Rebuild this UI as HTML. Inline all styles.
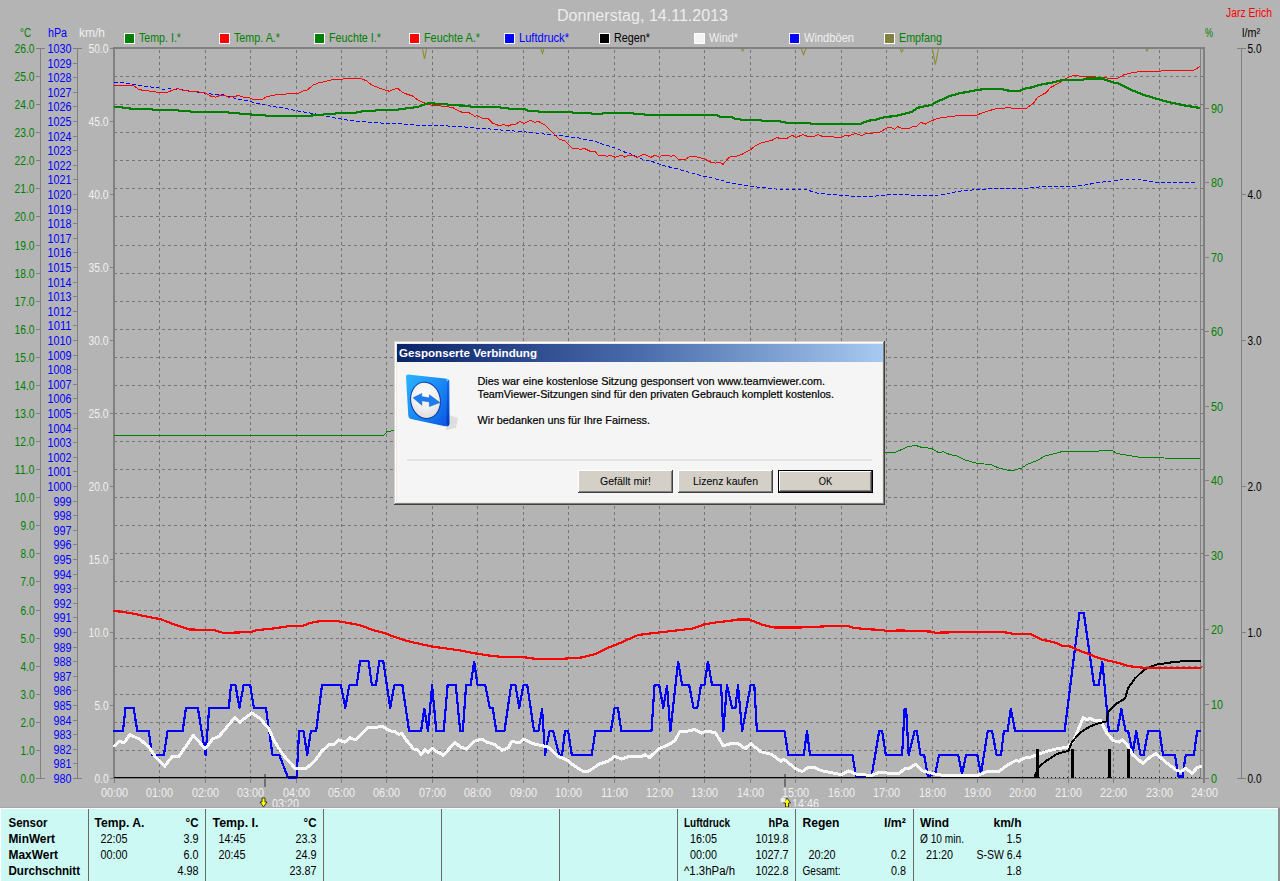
<!DOCTYPE html><html><head><meta charset="utf-8"><style>html,body{margin:0;padding:0;background:#b4b4b4;overflow:hidden}svg{display:block}text{font-family:"Liberation Sans",sans-serif}</style></head><body>
<svg width="1280" height="881" viewBox="0 0 1280 881">
<rect x="0" y="0" width="1280" height="881" fill="#b4b4b4" />
<text x="557" y="21" fill="#ececec" font-size="16" text-anchor="start" textLength="171" lengthAdjust="spacingAndGlyphs" >Donnerstag, 14.11.2013</text>
<text x="1226" y="17" fill="#ff0000" font-size="12" text-anchor="start" textLength="46" lengthAdjust="spacingAndGlyphs" >Jarz Erich</text>
<rect x="124" y="33" width="11" height="11" fill="#ffffff" />
<rect x="125" y="34" width="9" height="9" fill="#008000" />
<text x="139" y="42" fill="#008000" font-size="12" text-anchor="start" textLength="42" lengthAdjust="spacingAndGlyphs" >Temp. I.*</text>
<rect x="219" y="33" width="11" height="11" fill="#ffffff" />
<rect x="220" y="34" width="9" height="9" fill="#ff0000" />
<text x="234" y="42" fill="#008000" font-size="12" text-anchor="start" textLength="46" lengthAdjust="spacingAndGlyphs" >Temp. A.*</text>
<rect x="314" y="33" width="11" height="11" fill="#ffffff" />
<rect x="315" y="34" width="9" height="9" fill="#008000" />
<text x="329" y="42" fill="#008000" font-size="12" text-anchor="start" textLength="52" lengthAdjust="spacingAndGlyphs" >Feuchte I.*</text>
<rect x="409" y="33" width="11" height="11" fill="#ffffff" />
<rect x="410" y="34" width="9" height="9" fill="#ff0000" />
<text x="424" y="42" fill="#008000" font-size="12" text-anchor="start" textLength="56" lengthAdjust="spacingAndGlyphs" >Feuchte A.*</text>
<rect x="504" y="33" width="11" height="11" fill="#ffffff" />
<rect x="505" y="34" width="9" height="9" fill="#0000ff" />
<text x="519" y="42" fill="#0000ff" font-size="12" text-anchor="start" textLength="50" lengthAdjust="spacingAndGlyphs" >Luftdruck*</text>
<rect x="599" y="33" width="11" height="11" fill="#ffffff" />
<rect x="600" y="34" width="9" height="9" fill="#000000" />
<text x="614" y="42" fill="#000000" font-size="12" text-anchor="start" textLength="36" lengthAdjust="spacingAndGlyphs" >Regen*</text>
<rect x="694" y="33" width="11" height="11" fill="#ffffff" />
<rect x="695" y="34" width="9" height="9" fill="#f4f4f4" />
<text x="709" y="42" fill="#f0f0f0" font-size="12" text-anchor="start" textLength="29" lengthAdjust="spacingAndGlyphs" >Wind*</text>
<rect x="789" y="33" width="11" height="11" fill="#ffffff" />
<rect x="790" y="34" width="9" height="9" fill="#0000ff" />
<text x="804" y="42" fill="#f0f0f0" font-size="12" text-anchor="start" textLength="50" lengthAdjust="spacingAndGlyphs" >Windböen</text>
<rect x="884" y="33" width="11" height="11" fill="#ffffff" />
<rect x="885" y="34" width="9" height="9" fill="#808040" />
<text x="899" y="42" fill="#008000" font-size="12" text-anchor="start" textLength="43" lengthAdjust="spacingAndGlyphs" >Empfang</text>
<text x="20" y="37" fill="#008000" font-size="12" text-anchor="start" textLength="11" lengthAdjust="spacingAndGlyphs" >°C</text>
<text x="48" y="37" fill="#0000ff" font-size="12" text-anchor="start" textLength="19" lengthAdjust="spacingAndGlyphs" >hPa</text>
<text x="79" y="37" fill="#f0f0f0" font-size="12" text-anchor="start" textLength="26" lengthAdjust="spacingAndGlyphs" >km/h</text>
<text x="1205" y="37" fill="#008000" font-size="12" text-anchor="start" textLength="8" lengthAdjust="spacingAndGlyphs" >%</text>
<text x="1242" y="37" fill="#000000" font-size="12" text-anchor="start" textLength="18" lengthAdjust="spacingAndGlyphs" >l/m²</text>
<g shape-rendering="crispEdges">
<rect x="40" y="48" width="1" height="731" fill="#808080" />
<rect x="77" y="48" width="1" height="731" fill="#808080" />
<rect x="36" y="48" width="9" height="1" fill="#808080" />
<rect x="36" y="76" width="4" height="1" fill="#808080" />
<rect x="36" y="104" width="4" height="1" fill="#808080" />
<rect x="36" y="132" width="4" height="1" fill="#808080" />
<rect x="36" y="160" width="4" height="1" fill="#808080" />
<rect x="36" y="188" width="4" height="1" fill="#808080" />
<rect x="36" y="216" width="4" height="1" fill="#808080" />
<rect x="36" y="245" width="4" height="1" fill="#808080" />
<rect x="36" y="273" width="4" height="1" fill="#808080" />
<rect x="36" y="301" width="4" height="1" fill="#808080" />
<rect x="36" y="329" width="4" height="1" fill="#808080" />
<rect x="36" y="357" width="4" height="1" fill="#808080" />
<rect x="36" y="385" width="4" height="1" fill="#808080" />
<rect x="36" y="413" width="4" height="1" fill="#808080" />
<rect x="36" y="441" width="4" height="1" fill="#808080" />
<rect x="36" y="469" width="4" height="1" fill="#808080" />
<rect x="36" y="497" width="4" height="1" fill="#808080" />
<rect x="36" y="525" width="4" height="1" fill="#808080" />
<rect x="36" y="553" width="4" height="1" fill="#808080" />
<rect x="36" y="581" width="4" height="1" fill="#808080" />
<rect x="36" y="610" width="4" height="1" fill="#808080" />
<rect x="36" y="638" width="4" height="1" fill="#808080" />
<rect x="36" y="666" width="4" height="1" fill="#808080" />
<rect x="36" y="694" width="4" height="1" fill="#808080" />
<rect x="36" y="722" width="4" height="1" fill="#808080" />
<rect x="36" y="750" width="4" height="1" fill="#808080" />
<rect x="36" y="778" width="9" height="1" fill="#808080" />
<rect x="73" y="48" width="9" height="1" fill="#808080" />
<rect x="73" y="63" width="4" height="1" fill="#808080" />
<rect x="73" y="77" width="4" height="1" fill="#808080" />
<rect x="73" y="92" width="4" height="1" fill="#808080" />
<rect x="73" y="106" width="4" height="1" fill="#808080" />
<rect x="73" y="121" width="4" height="1" fill="#808080" />
<rect x="73" y="136" width="4" height="1" fill="#808080" />
<rect x="73" y="150" width="4" height="1" fill="#808080" />
<rect x="73" y="165" width="4" height="1" fill="#808080" />
<rect x="73" y="179" width="4" height="1" fill="#808080" />
<rect x="73" y="194" width="4" height="1" fill="#808080" />
<rect x="73" y="209" width="4" height="1" fill="#808080" />
<rect x="73" y="223" width="4" height="1" fill="#808080" />
<rect x="73" y="238" width="4" height="1" fill="#808080" />
<rect x="73" y="252" width="4" height="1" fill="#808080" />
<rect x="73" y="267" width="4" height="1" fill="#808080" />
<rect x="73" y="282" width="4" height="1" fill="#808080" />
<rect x="73" y="296" width="4" height="1" fill="#808080" />
<rect x="73" y="311" width="4" height="1" fill="#808080" />
<rect x="73" y="325" width="4" height="1" fill="#808080" />
<rect x="73" y="340" width="4" height="1" fill="#808080" />
<rect x="73" y="355" width="4" height="1" fill="#808080" />
<rect x="73" y="369" width="4" height="1" fill="#808080" />
<rect x="73" y="384" width="4" height="1" fill="#808080" />
<rect x="73" y="398" width="4" height="1" fill="#808080" />
<rect x="73" y="413" width="4" height="1" fill="#808080" />
<rect x="73" y="428" width="4" height="1" fill="#808080" />
<rect x="73" y="442" width="4" height="1" fill="#808080" />
<rect x="73" y="457" width="4" height="1" fill="#808080" />
<rect x="73" y="471" width="4" height="1" fill="#808080" />
<rect x="73" y="486" width="4" height="1" fill="#808080" />
<rect x="73" y="501" width="4" height="1" fill="#808080" />
<rect x="73" y="515" width="4" height="1" fill="#808080" />
<rect x="73" y="530" width="4" height="1" fill="#808080" />
<rect x="73" y="544" width="4" height="1" fill="#808080" />
<rect x="73" y="559" width="4" height="1" fill="#808080" />
<rect x="73" y="574" width="4" height="1" fill="#808080" />
<rect x="73" y="588" width="4" height="1" fill="#808080" />
<rect x="73" y="603" width="4" height="1" fill="#808080" />
<rect x="73" y="617" width="4" height="1" fill="#808080" />
<rect x="73" y="632" width="4" height="1" fill="#808080" />
<rect x="73" y="647" width="4" height="1" fill="#808080" />
<rect x="73" y="661" width="4" height="1" fill="#808080" />
<rect x="73" y="676" width="4" height="1" fill="#808080" />
<rect x="73" y="690" width="4" height="1" fill="#808080" />
<rect x="73" y="705" width="4" height="1" fill="#808080" />
<rect x="73" y="720" width="4" height="1" fill="#808080" />
<rect x="73" y="734" width="4" height="1" fill="#808080" />
<rect x="73" y="749" width="4" height="1" fill="#808080" />
<rect x="73" y="763" width="4" height="1" fill="#808080" />
<rect x="73" y="778" width="9" height="1" fill="#808080" />
<rect x="110" y="48" width="4" height="1" fill="#808080" />
<rect x="110" y="121" width="4" height="1" fill="#808080" />
<rect x="110" y="194" width="4" height="1" fill="#808080" />
<rect x="110" y="267" width="4" height="1" fill="#808080" />
<rect x="110" y="340" width="4" height="1" fill="#808080" />
<rect x="110" y="413" width="4" height="1" fill="#808080" />
<rect x="110" y="486" width="4" height="1" fill="#808080" />
<rect x="110" y="559" width="4" height="1" fill="#808080" />
<rect x="110" y="632" width="4" height="1" fill="#808080" />
<rect x="110" y="705" width="4" height="1" fill="#808080" />
<rect x="110" y="778" width="4" height="1" fill="#808080" />
</g>
<text x="34.5" y="53" fill="#008000" font-size="12" text-anchor="end" textLength="20" lengthAdjust="spacingAndGlyphs" >26.0</text>
<text x="34.5" y="81" fill="#008000" font-size="12" text-anchor="end" textLength="20" lengthAdjust="spacingAndGlyphs" >25.0</text>
<text x="34.5" y="109" fill="#008000" font-size="12" text-anchor="end" textLength="20" lengthAdjust="spacingAndGlyphs" >24.0</text>
<text x="34.5" y="137" fill="#008000" font-size="12" text-anchor="end" textLength="20" lengthAdjust="spacingAndGlyphs" >23.0</text>
<text x="34.5" y="165" fill="#008000" font-size="12" text-anchor="end" textLength="20" lengthAdjust="spacingAndGlyphs" >22.0</text>
<text x="34.5" y="193" fill="#008000" font-size="12" text-anchor="end" textLength="20" lengthAdjust="spacingAndGlyphs" >21.0</text>
<text x="34.5" y="221" fill="#008000" font-size="12" text-anchor="end" textLength="20" lengthAdjust="spacingAndGlyphs" >20.0</text>
<text x="34.5" y="250" fill="#008000" font-size="12" text-anchor="end" textLength="20" lengthAdjust="spacingAndGlyphs" >19.0</text>
<text x="34.5" y="278" fill="#008000" font-size="12" text-anchor="end" textLength="20" lengthAdjust="spacingAndGlyphs" >18.0</text>
<text x="34.5" y="306" fill="#008000" font-size="12" text-anchor="end" textLength="20" lengthAdjust="spacingAndGlyphs" >17.0</text>
<text x="34.5" y="334" fill="#008000" font-size="12" text-anchor="end" textLength="20" lengthAdjust="spacingAndGlyphs" >16.0</text>
<text x="34.5" y="362" fill="#008000" font-size="12" text-anchor="end" textLength="20" lengthAdjust="spacingAndGlyphs" >15.0</text>
<text x="34.5" y="390" fill="#008000" font-size="12" text-anchor="end" textLength="20" lengthAdjust="spacingAndGlyphs" >14.0</text>
<text x="34.5" y="418" fill="#008000" font-size="12" text-anchor="end" textLength="20" lengthAdjust="spacingAndGlyphs" >13.0</text>
<text x="34.5" y="446" fill="#008000" font-size="12" text-anchor="end" textLength="20" lengthAdjust="spacingAndGlyphs" >12.0</text>
<text x="34.5" y="474" fill="#008000" font-size="12" text-anchor="end" textLength="20" lengthAdjust="spacingAndGlyphs" >11.0</text>
<text x="34.5" y="502" fill="#008000" font-size="12" text-anchor="end" textLength="20" lengthAdjust="spacingAndGlyphs" >10.0</text>
<text x="34.5" y="530" fill="#008000" font-size="12" text-anchor="end" textLength="14" lengthAdjust="spacingAndGlyphs" >9.0</text>
<text x="34.5" y="558" fill="#008000" font-size="12" text-anchor="end" textLength="14" lengthAdjust="spacingAndGlyphs" >8.0</text>
<text x="34.5" y="586" fill="#008000" font-size="12" text-anchor="end" textLength="14" lengthAdjust="spacingAndGlyphs" >7.0</text>
<text x="34.5" y="615" fill="#008000" font-size="12" text-anchor="end" textLength="14" lengthAdjust="spacingAndGlyphs" >6.0</text>
<text x="34.5" y="643" fill="#008000" font-size="12" text-anchor="end" textLength="14" lengthAdjust="spacingAndGlyphs" >5.0</text>
<text x="34.5" y="671" fill="#008000" font-size="12" text-anchor="end" textLength="14" lengthAdjust="spacingAndGlyphs" >4.0</text>
<text x="34.5" y="699" fill="#008000" font-size="12" text-anchor="end" textLength="14" lengthAdjust="spacingAndGlyphs" >3.0</text>
<text x="34.5" y="727" fill="#008000" font-size="12" text-anchor="end" textLength="14" lengthAdjust="spacingAndGlyphs" >2.0</text>
<text x="34.5" y="755" fill="#008000" font-size="12" text-anchor="end" textLength="14" lengthAdjust="spacingAndGlyphs" >1.0</text>
<text x="34.5" y="783" fill="#008000" font-size="12" text-anchor="end" textLength="14" lengthAdjust="spacingAndGlyphs" >0.0</text>
<text x="71.5" y="53" fill="#0000ff" font-size="12" text-anchor="end" textLength="24" lengthAdjust="spacingAndGlyphs" >1030</text>
<text x="71.5" y="68" fill="#0000ff" font-size="12" text-anchor="end" textLength="24" lengthAdjust="spacingAndGlyphs" >1029</text>
<text x="71.5" y="82" fill="#0000ff" font-size="12" text-anchor="end" textLength="24" lengthAdjust="spacingAndGlyphs" >1028</text>
<text x="71.5" y="97" fill="#0000ff" font-size="12" text-anchor="end" textLength="24" lengthAdjust="spacingAndGlyphs" >1027</text>
<text x="71.5" y="111" fill="#0000ff" font-size="12" text-anchor="end" textLength="24" lengthAdjust="spacingAndGlyphs" >1026</text>
<text x="71.5" y="126" fill="#0000ff" font-size="12" text-anchor="end" textLength="24" lengthAdjust="spacingAndGlyphs" >1025</text>
<text x="71.5" y="141" fill="#0000ff" font-size="12" text-anchor="end" textLength="24" lengthAdjust="spacingAndGlyphs" >1024</text>
<text x="71.5" y="155" fill="#0000ff" font-size="12" text-anchor="end" textLength="24" lengthAdjust="spacingAndGlyphs" >1023</text>
<text x="71.5" y="170" fill="#0000ff" font-size="12" text-anchor="end" textLength="24" lengthAdjust="spacingAndGlyphs" >1022</text>
<text x="71.5" y="184" fill="#0000ff" font-size="12" text-anchor="end" textLength="24" lengthAdjust="spacingAndGlyphs" >1021</text>
<text x="71.5" y="199" fill="#0000ff" font-size="12" text-anchor="end" textLength="24" lengthAdjust="spacingAndGlyphs" >1020</text>
<text x="71.5" y="214" fill="#0000ff" font-size="12" text-anchor="end" textLength="24" lengthAdjust="spacingAndGlyphs" >1019</text>
<text x="71.5" y="228" fill="#0000ff" font-size="12" text-anchor="end" textLength="24" lengthAdjust="spacingAndGlyphs" >1018</text>
<text x="71.5" y="243" fill="#0000ff" font-size="12" text-anchor="end" textLength="24" lengthAdjust="spacingAndGlyphs" >1017</text>
<text x="71.5" y="257" fill="#0000ff" font-size="12" text-anchor="end" textLength="24" lengthAdjust="spacingAndGlyphs" >1016</text>
<text x="71.5" y="272" fill="#0000ff" font-size="12" text-anchor="end" textLength="24" lengthAdjust="spacingAndGlyphs" >1015</text>
<text x="71.5" y="287" fill="#0000ff" font-size="12" text-anchor="end" textLength="24" lengthAdjust="spacingAndGlyphs" >1014</text>
<text x="71.5" y="301" fill="#0000ff" font-size="12" text-anchor="end" textLength="24" lengthAdjust="spacingAndGlyphs" >1013</text>
<text x="71.5" y="316" fill="#0000ff" font-size="12" text-anchor="end" textLength="24" lengthAdjust="spacingAndGlyphs" >1012</text>
<text x="71.5" y="330" fill="#0000ff" font-size="12" text-anchor="end" textLength="24" lengthAdjust="spacingAndGlyphs" >1011</text>
<text x="71.5" y="345" fill="#0000ff" font-size="12" text-anchor="end" textLength="24" lengthAdjust="spacingAndGlyphs" >1010</text>
<text x="71.5" y="360" fill="#0000ff" font-size="12" text-anchor="end" textLength="24" lengthAdjust="spacingAndGlyphs" >1009</text>
<text x="71.5" y="374" fill="#0000ff" font-size="12" text-anchor="end" textLength="24" lengthAdjust="spacingAndGlyphs" >1008</text>
<text x="71.5" y="389" fill="#0000ff" font-size="12" text-anchor="end" textLength="24" lengthAdjust="spacingAndGlyphs" >1007</text>
<text x="71.5" y="403" fill="#0000ff" font-size="12" text-anchor="end" textLength="24" lengthAdjust="spacingAndGlyphs" >1006</text>
<text x="71.5" y="418" fill="#0000ff" font-size="12" text-anchor="end" textLength="24" lengthAdjust="spacingAndGlyphs" >1005</text>
<text x="71.5" y="433" fill="#0000ff" font-size="12" text-anchor="end" textLength="24" lengthAdjust="spacingAndGlyphs" >1004</text>
<text x="71.5" y="447" fill="#0000ff" font-size="12" text-anchor="end" textLength="24" lengthAdjust="spacingAndGlyphs" >1003</text>
<text x="71.5" y="462" fill="#0000ff" font-size="12" text-anchor="end" textLength="24" lengthAdjust="spacingAndGlyphs" >1002</text>
<text x="71.5" y="476" fill="#0000ff" font-size="12" text-anchor="end" textLength="24" lengthAdjust="spacingAndGlyphs" >1001</text>
<text x="71.5" y="491" fill="#0000ff" font-size="12" text-anchor="end" textLength="24" lengthAdjust="spacingAndGlyphs" >1000</text>
<text x="71.5" y="506" fill="#0000ff" font-size="12" text-anchor="end" textLength="18" lengthAdjust="spacingAndGlyphs" >999</text>
<text x="71.5" y="520" fill="#0000ff" font-size="12" text-anchor="end" textLength="18" lengthAdjust="spacingAndGlyphs" >998</text>
<text x="71.5" y="535" fill="#0000ff" font-size="12" text-anchor="end" textLength="18" lengthAdjust="spacingAndGlyphs" >997</text>
<text x="71.5" y="549" fill="#0000ff" font-size="12" text-anchor="end" textLength="18" lengthAdjust="spacingAndGlyphs" >996</text>
<text x="71.5" y="564" fill="#0000ff" font-size="12" text-anchor="end" textLength="18" lengthAdjust="spacingAndGlyphs" >995</text>
<text x="71.5" y="579" fill="#0000ff" font-size="12" text-anchor="end" textLength="18" lengthAdjust="spacingAndGlyphs" >994</text>
<text x="71.5" y="593" fill="#0000ff" font-size="12" text-anchor="end" textLength="18" lengthAdjust="spacingAndGlyphs" >993</text>
<text x="71.5" y="608" fill="#0000ff" font-size="12" text-anchor="end" textLength="18" lengthAdjust="spacingAndGlyphs" >992</text>
<text x="71.5" y="622" fill="#0000ff" font-size="12" text-anchor="end" textLength="18" lengthAdjust="spacingAndGlyphs" >991</text>
<text x="71.5" y="637" fill="#0000ff" font-size="12" text-anchor="end" textLength="18" lengthAdjust="spacingAndGlyphs" >990</text>
<text x="71.5" y="652" fill="#0000ff" font-size="12" text-anchor="end" textLength="18" lengthAdjust="spacingAndGlyphs" >989</text>
<text x="71.5" y="666" fill="#0000ff" font-size="12" text-anchor="end" textLength="18" lengthAdjust="spacingAndGlyphs" >988</text>
<text x="71.5" y="681" fill="#0000ff" font-size="12" text-anchor="end" textLength="18" lengthAdjust="spacingAndGlyphs" >987</text>
<text x="71.5" y="695" fill="#0000ff" font-size="12" text-anchor="end" textLength="18" lengthAdjust="spacingAndGlyphs" >986</text>
<text x="71.5" y="710" fill="#0000ff" font-size="12" text-anchor="end" textLength="18" lengthAdjust="spacingAndGlyphs" >985</text>
<text x="71.5" y="725" fill="#0000ff" font-size="12" text-anchor="end" textLength="18" lengthAdjust="spacingAndGlyphs" >984</text>
<text x="71.5" y="739" fill="#0000ff" font-size="12" text-anchor="end" textLength="18" lengthAdjust="spacingAndGlyphs" >983</text>
<text x="71.5" y="754" fill="#0000ff" font-size="12" text-anchor="end" textLength="18" lengthAdjust="spacingAndGlyphs" >982</text>
<text x="71.5" y="768" fill="#0000ff" font-size="12" text-anchor="end" textLength="18" lengthAdjust="spacingAndGlyphs" >981</text>
<text x="71.5" y="783" fill="#0000ff" font-size="12" text-anchor="end" textLength="18" lengthAdjust="spacingAndGlyphs" >980</text>
<text x="108.5" y="53" fill="#f0f0f0" font-size="12" text-anchor="end" textLength="20" lengthAdjust="spacingAndGlyphs" >50.0</text>
<text x="108.5" y="126" fill="#f0f0f0" font-size="12" text-anchor="end" textLength="20" lengthAdjust="spacingAndGlyphs" >45.0</text>
<text x="108.5" y="199" fill="#f0f0f0" font-size="12" text-anchor="end" textLength="20" lengthAdjust="spacingAndGlyphs" >40.0</text>
<text x="108.5" y="272" fill="#f0f0f0" font-size="12" text-anchor="end" textLength="20" lengthAdjust="spacingAndGlyphs" >35.0</text>
<text x="108.5" y="345" fill="#f0f0f0" font-size="12" text-anchor="end" textLength="20" lengthAdjust="spacingAndGlyphs" >30.0</text>
<text x="108.5" y="418" fill="#f0f0f0" font-size="12" text-anchor="end" textLength="20" lengthAdjust="spacingAndGlyphs" >25.0</text>
<text x="108.5" y="491" fill="#f0f0f0" font-size="12" text-anchor="end" textLength="20" lengthAdjust="spacingAndGlyphs" >20.0</text>
<text x="108.5" y="564" fill="#f0f0f0" font-size="12" text-anchor="end" textLength="20" lengthAdjust="spacingAndGlyphs" >15.0</text>
<text x="108.5" y="637" fill="#f0f0f0" font-size="12" text-anchor="end" textLength="20" lengthAdjust="spacingAndGlyphs" >10.0</text>
<text x="108.5" y="710" fill="#f0f0f0" font-size="12" text-anchor="end" textLength="14" lengthAdjust="spacingAndGlyphs" >5.0</text>
<text x="108.5" y="783" fill="#f0f0f0" font-size="12" text-anchor="end" textLength="14" lengthAdjust="spacingAndGlyphs" >0.0</text>
<g shape-rendering="crispEdges">
<line x1="114" y1="76.5" x2="1203" y2="76.5" stroke="#767676" stroke-width="1" stroke-dasharray="3,3"/>
<line x1="114" y1="104.5" x2="1203" y2="104.5" stroke="#767676" stroke-width="1" stroke-dasharray="3,3"/>
<line x1="114" y1="132.5" x2="1203" y2="132.5" stroke="#767676" stroke-width="1" stroke-dasharray="3,3"/>
<line x1="114" y1="160.5" x2="1203" y2="160.5" stroke="#767676" stroke-width="1" stroke-dasharray="3,3"/>
<line x1="114" y1="188.5" x2="1203" y2="188.5" stroke="#767676" stroke-width="1" stroke-dasharray="3,3"/>
<line x1="114" y1="216.5" x2="1203" y2="216.5" stroke="#767676" stroke-width="1" stroke-dasharray="3,3"/>
<line x1="114" y1="245.5" x2="1203" y2="245.5" stroke="#767676" stroke-width="1" stroke-dasharray="3,3"/>
<line x1="114" y1="273.5" x2="1203" y2="273.5" stroke="#767676" stroke-width="1" stroke-dasharray="3,3"/>
<line x1="114" y1="301.5" x2="1203" y2="301.5" stroke="#767676" stroke-width="1" stroke-dasharray="3,3"/>
<line x1="114" y1="329.5" x2="1203" y2="329.5" stroke="#767676" stroke-width="1" stroke-dasharray="3,3"/>
<line x1="114" y1="357.5" x2="1203" y2="357.5" stroke="#767676" stroke-width="1" stroke-dasharray="3,3"/>
<line x1="114" y1="385.5" x2="1203" y2="385.5" stroke="#767676" stroke-width="1" stroke-dasharray="3,3"/>
<line x1="114" y1="413.5" x2="1203" y2="413.5" stroke="#767676" stroke-width="1" stroke-dasharray="3,3"/>
<line x1="114" y1="441.5" x2="1203" y2="441.5" stroke="#767676" stroke-width="1" stroke-dasharray="3,3"/>
<line x1="114" y1="469.5" x2="1203" y2="469.5" stroke="#767676" stroke-width="1" stroke-dasharray="3,3"/>
<line x1="114" y1="497.5" x2="1203" y2="497.5" stroke="#767676" stroke-width="1" stroke-dasharray="3,3"/>
<line x1="114" y1="525.5" x2="1203" y2="525.5" stroke="#767676" stroke-width="1" stroke-dasharray="3,3"/>
<line x1="114" y1="553.5" x2="1203" y2="553.5" stroke="#767676" stroke-width="1" stroke-dasharray="3,3"/>
<line x1="114" y1="581.5" x2="1203" y2="581.5" stroke="#767676" stroke-width="1" stroke-dasharray="3,3"/>
<line x1="114" y1="610.5" x2="1203" y2="610.5" stroke="#767676" stroke-width="1" stroke-dasharray="3,3"/>
<line x1="114" y1="638.5" x2="1203" y2="638.5" stroke="#767676" stroke-width="1" stroke-dasharray="3,3"/>
<line x1="114" y1="666.5" x2="1203" y2="666.5" stroke="#767676" stroke-width="1" stroke-dasharray="3,3"/>
<line x1="114" y1="694.5" x2="1203" y2="694.5" stroke="#767676" stroke-width="1" stroke-dasharray="3,3"/>
<line x1="114" y1="722.5" x2="1203" y2="722.5" stroke="#767676" stroke-width="1" stroke-dasharray="3,3"/>
<line x1="114" y1="750.5" x2="1203" y2="750.5" stroke="#767676" stroke-width="1" stroke-dasharray="3,3"/>
<line x1="159.5" y1="50" x2="159.5" y2="778" stroke="#767676" stroke-width="1" stroke-dasharray="3,3"/>
<line x1="205.5" y1="50" x2="205.5" y2="778" stroke="#767676" stroke-width="1" stroke-dasharray="3,3"/>
<line x1="250.5" y1="50" x2="250.5" y2="778" stroke="#767676" stroke-width="1" stroke-dasharray="3,3"/>
<line x1="296.5" y1="50" x2="296.5" y2="778" stroke="#767676" stroke-width="1" stroke-dasharray="3,3"/>
<line x1="341.5" y1="50" x2="341.5" y2="778" stroke="#767676" stroke-width="1" stroke-dasharray="3,3"/>
<line x1="386.5" y1="50" x2="386.5" y2="778" stroke="#767676" stroke-width="1" stroke-dasharray="3,3"/>
<line x1="432.5" y1="50" x2="432.5" y2="778" stroke="#767676" stroke-width="1" stroke-dasharray="3,3"/>
<line x1="477.5" y1="50" x2="477.5" y2="778" stroke="#767676" stroke-width="1" stroke-dasharray="3,3"/>
<line x1="523.5" y1="50" x2="523.5" y2="778" stroke="#767676" stroke-width="1" stroke-dasharray="3,3"/>
<line x1="568.5" y1="50" x2="568.5" y2="778" stroke="#767676" stroke-width="1" stroke-dasharray="3,3"/>
<line x1="614.5" y1="50" x2="614.5" y2="778" stroke="#767676" stroke-width="1" stroke-dasharray="3,3"/>
<line x1="659.5" y1="50" x2="659.5" y2="778" stroke="#767676" stroke-width="1" stroke-dasharray="3,3"/>
<line x1="704.5" y1="50" x2="704.5" y2="778" stroke="#767676" stroke-width="1" stroke-dasharray="3,3"/>
<line x1="750.5" y1="50" x2="750.5" y2="778" stroke="#767676" stroke-width="1" stroke-dasharray="3,3"/>
<line x1="795.5" y1="50" x2="795.5" y2="778" stroke="#767676" stroke-width="1" stroke-dasharray="3,3"/>
<line x1="841.5" y1="50" x2="841.5" y2="778" stroke="#767676" stroke-width="1" stroke-dasharray="3,3"/>
<line x1="886.5" y1="50" x2="886.5" y2="778" stroke="#767676" stroke-width="1" stroke-dasharray="3,3"/>
<line x1="932.5" y1="50" x2="932.5" y2="778" stroke="#767676" stroke-width="1" stroke-dasharray="3,3"/>
<line x1="977.5" y1="50" x2="977.5" y2="778" stroke="#767676" stroke-width="1" stroke-dasharray="3,3"/>
<line x1="1022.5" y1="50" x2="1022.5" y2="778" stroke="#767676" stroke-width="1" stroke-dasharray="3,3"/>
<line x1="1068.5" y1="50" x2="1068.5" y2="778" stroke="#767676" stroke-width="1" stroke-dasharray="3,3"/>
<line x1="1113.5" y1="50" x2="1113.5" y2="778" stroke="#767676" stroke-width="1" stroke-dasharray="3,3"/>
<line x1="1159.5" y1="50" x2="1159.5" y2="778" stroke="#767676" stroke-width="1" stroke-dasharray="3,3"/>
<rect x="113" y="47" width="1092" height="2" fill="#808080" />
<rect x="113" y="47" width="2" height="732" fill="#808080" />
<rect x="1200" y="49" width="1" height="729" fill="#808080" />
<rect x="1203" y="47" width="2" height="736" fill="#808080" />
<rect x="113" y="778" width="1092" height="1" fill="#808080" />
<rect x="114" y="779" width="1" height="4" fill="#808080" />
<rect x="159" y="779" width="1" height="4" fill="#808080" />
<rect x="205" y="779" width="1" height="4" fill="#808080" />
<rect x="250" y="779" width="1" height="4" fill="#808080" />
<rect x="296" y="779" width="1" height="4" fill="#808080" />
<rect x="341" y="779" width="1" height="4" fill="#808080" />
<rect x="386" y="779" width="1" height="4" fill="#808080" />
<rect x="432" y="779" width="1" height="4" fill="#808080" />
<rect x="477" y="779" width="1" height="4" fill="#808080" />
<rect x="523" y="779" width="1" height="4" fill="#808080" />
<rect x="568" y="779" width="1" height="4" fill="#808080" />
<rect x="614" y="779" width="1" height="4" fill="#808080" />
<rect x="659" y="779" width="1" height="4" fill="#808080" />
<rect x="704" y="779" width="1" height="4" fill="#808080" />
<rect x="750" y="779" width="1" height="4" fill="#808080" />
<rect x="795" y="779" width="1" height="4" fill="#808080" />
<rect x="841" y="779" width="1" height="4" fill="#808080" />
<rect x="886" y="779" width="1" height="4" fill="#808080" />
<rect x="932" y="779" width="1" height="4" fill="#808080" />
<rect x="977" y="779" width="1" height="4" fill="#808080" />
<rect x="1022" y="779" width="1" height="4" fill="#808080" />
<rect x="1068" y="779" width="1" height="4" fill="#808080" />
<rect x="1113" y="779" width="1" height="4" fill="#808080" />
<rect x="1159" y="779" width="1" height="4" fill="#808080" />
<rect x="1205" y="778" width="4" height="1" fill="#808080" />
<rect x="1205" y="704" width="4" height="1" fill="#808080" />
<rect x="1205" y="629" width="4" height="1" fill="#808080" />
<rect x="1205" y="555" width="4" height="1" fill="#808080" />
<rect x="1205" y="480" width="4" height="1" fill="#808080" />
<rect x="1205" y="406" width="4" height="1" fill="#808080" />
<rect x="1205" y="331" width="4" height="1" fill="#808080" />
<rect x="1205" y="257" width="4" height="1" fill="#808080" />
<rect x="1205" y="182" width="4" height="1" fill="#808080" />
<rect x="1205" y="108" width="4" height="1" fill="#808080" />
<rect x="1241" y="48" width="1" height="731" fill="#808080" />
<rect x="1237" y="778" width="9" height="1" fill="#808080" />
<rect x="1241" y="632" width="5" height="1" fill="#808080" />
<rect x="1241" y="486" width="5" height="1" fill="#808080" />
<rect x="1241" y="340" width="5" height="1" fill="#808080" />
<rect x="1241" y="194" width="5" height="1" fill="#808080" />
<rect x="1237" y="48" width="9" height="1" fill="#808080" />
</g>
<text x="1211" y="783" fill="#008000" font-size="12" text-anchor="start" textLength="6" lengthAdjust="spacingAndGlyphs" >0</text>
<text x="1211" y="709" fill="#008000" font-size="12" text-anchor="start" textLength="12" lengthAdjust="spacingAndGlyphs" >10</text>
<text x="1211" y="634" fill="#008000" font-size="12" text-anchor="start" textLength="12" lengthAdjust="spacingAndGlyphs" >20</text>
<text x="1211" y="560" fill="#008000" font-size="12" text-anchor="start" textLength="12" lengthAdjust="spacingAndGlyphs" >30</text>
<text x="1211" y="485" fill="#008000" font-size="12" text-anchor="start" textLength="12" lengthAdjust="spacingAndGlyphs" >40</text>
<text x="1211" y="411" fill="#008000" font-size="12" text-anchor="start" textLength="12" lengthAdjust="spacingAndGlyphs" >50</text>
<text x="1211" y="336" fill="#008000" font-size="12" text-anchor="start" textLength="12" lengthAdjust="spacingAndGlyphs" >60</text>
<text x="1211" y="262" fill="#008000" font-size="12" text-anchor="start" textLength="12" lengthAdjust="spacingAndGlyphs" >70</text>
<text x="1211" y="187" fill="#008000" font-size="12" text-anchor="start" textLength="12" lengthAdjust="spacingAndGlyphs" >80</text>
<text x="1211" y="113" fill="#008000" font-size="12" text-anchor="start" textLength="12" lengthAdjust="spacingAndGlyphs" >90</text>
<text x="1247.5" y="783" fill="#000000" font-size="12" text-anchor="start" textLength="14" lengthAdjust="spacingAndGlyphs" >0.0</text>
<text x="1247.5" y="637" fill="#000000" font-size="12" text-anchor="start" textLength="14" lengthAdjust="spacingAndGlyphs" >1.0</text>
<text x="1247.5" y="491" fill="#000000" font-size="12" text-anchor="start" textLength="14" lengthAdjust="spacingAndGlyphs" >2.0</text>
<text x="1247.5" y="345" fill="#000000" font-size="12" text-anchor="start" textLength="14" lengthAdjust="spacingAndGlyphs" >3.0</text>
<text x="1247.5" y="199" fill="#000000" font-size="12" text-anchor="start" textLength="14" lengthAdjust="spacingAndGlyphs" >4.0</text>
<text x="1247.5" y="53" fill="#000000" font-size="12" text-anchor="start" textLength="14" lengthAdjust="spacingAndGlyphs" >5.0</text>
<text x="114.5" y="797" fill="#f0f0f0" font-size="12" text-anchor="middle" textLength="27" lengthAdjust="spacingAndGlyphs" >00:00</text>
<text x="159.5" y="797" fill="#f0f0f0" font-size="12" text-anchor="middle" textLength="27" lengthAdjust="spacingAndGlyphs" >01:00</text>
<text x="205.5" y="797" fill="#f0f0f0" font-size="12" text-anchor="middle" textLength="27" lengthAdjust="spacingAndGlyphs" >02:00</text>
<text x="250.5" y="797" fill="#f0f0f0" font-size="12" text-anchor="middle" textLength="27" lengthAdjust="spacingAndGlyphs" >03:00</text>
<text x="296.5" y="797" fill="#f0f0f0" font-size="12" text-anchor="middle" textLength="27" lengthAdjust="spacingAndGlyphs" >04:00</text>
<text x="341.5" y="797" fill="#f0f0f0" font-size="12" text-anchor="middle" textLength="27" lengthAdjust="spacingAndGlyphs" >05:00</text>
<text x="386.5" y="797" fill="#f0f0f0" font-size="12" text-anchor="middle" textLength="27" lengthAdjust="spacingAndGlyphs" >06:00</text>
<text x="432.5" y="797" fill="#f0f0f0" font-size="12" text-anchor="middle" textLength="27" lengthAdjust="spacingAndGlyphs" >07:00</text>
<text x="477.5" y="797" fill="#f0f0f0" font-size="12" text-anchor="middle" textLength="27" lengthAdjust="spacingAndGlyphs" >08:00</text>
<text x="523.5" y="797" fill="#f0f0f0" font-size="12" text-anchor="middle" textLength="27" lengthAdjust="spacingAndGlyphs" >09:00</text>
<text x="568.5" y="797" fill="#f0f0f0" font-size="12" text-anchor="middle" textLength="27" lengthAdjust="spacingAndGlyphs" >10:00</text>
<text x="614.5" y="797" fill="#f0f0f0" font-size="12" text-anchor="middle" textLength="27" lengthAdjust="spacingAndGlyphs" >11:00</text>
<text x="659.5" y="797" fill="#f0f0f0" font-size="12" text-anchor="middle" textLength="27" lengthAdjust="spacingAndGlyphs" >12:00</text>
<text x="704.5" y="797" fill="#f0f0f0" font-size="12" text-anchor="middle" textLength="27" lengthAdjust="spacingAndGlyphs" >13:00</text>
<text x="750.5" y="797" fill="#f0f0f0" font-size="12" text-anchor="middle" textLength="27" lengthAdjust="spacingAndGlyphs" >14:00</text>
<text x="795.5" y="797" fill="#f0f0f0" font-size="12" text-anchor="middle" textLength="27" lengthAdjust="spacingAndGlyphs" >15:00</text>
<text x="841.5" y="797" fill="#f0f0f0" font-size="12" text-anchor="middle" textLength="27" lengthAdjust="spacingAndGlyphs" >16:00</text>
<text x="886.5" y="797" fill="#f0f0f0" font-size="12" text-anchor="middle" textLength="27" lengthAdjust="spacingAndGlyphs" >17:00</text>
<text x="932.5" y="797" fill="#f0f0f0" font-size="12" text-anchor="middle" textLength="27" lengthAdjust="spacingAndGlyphs" >18:00</text>
<text x="977.5" y="797" fill="#f0f0f0" font-size="12" text-anchor="middle" textLength="27" lengthAdjust="spacingAndGlyphs" >19:00</text>
<text x="1022.5" y="797" fill="#f0f0f0" font-size="12" text-anchor="middle" textLength="27" lengthAdjust="spacingAndGlyphs" >20:00</text>
<text x="1068.5" y="797" fill="#f0f0f0" font-size="12" text-anchor="middle" textLength="27" lengthAdjust="spacingAndGlyphs" >21:00</text>
<text x="1113.5" y="797" fill="#f0f0f0" font-size="12" text-anchor="middle" textLength="27" lengthAdjust="spacingAndGlyphs" >22:00</text>
<text x="1159.5" y="797" fill="#f0f0f0" font-size="12" text-anchor="middle" textLength="27" lengthAdjust="spacingAndGlyphs" >23:00</text>
<text x="1204.5" y="797" fill="#f0f0f0" font-size="12" text-anchor="middle" textLength="27" lengthAdjust="spacingAndGlyphs" >24:00</text>
<rect x="264" y="774" width="2" height="13" fill="#707070" shape-rendering="crispEdges"/>
<rect x="784" y="774" width="2" height="13" fill="#707070" shape-rendering="crispEdges"/>
<text x="272" y="808" fill="#f0f0f0" font-size="12" text-anchor="start" textLength="27" lengthAdjust="spacingAndGlyphs" >03:20</text>
<text x="792" y="808" fill="#f0f0f0" font-size="12" text-anchor="start" textLength="27" lengthAdjust="spacingAndGlyphs" >14:46</text>
<path d="M262,798 h3 v4 h2 l-3.5,5 l-3.5,-5 h2 z" fill="#ffff00" stroke="#000" stroke-width="0.7"/>
<path d="M787,798 l3.5,5 h-2 v4 h-3 v-4 h-2 z" fill="#ffff00" stroke="#000" stroke-width="0.7"/>
<circle cx="783" cy="800" r="2.5" fill="#f0f0f0"/>
<polyline points="422.5,49 424.5,58.8 426.5,49" fill="none" stroke="#8c8c30" stroke-width="1.1"/>
<polyline points="540.9,49 542.4,53.5 543.9,49" fill="none" stroke="#8c8c30" stroke-width="1.1"/>
<polyline points="741.45,49 742.7,51 743.95,49" fill="none" stroke="#8c8c30" stroke-width="1.1"/>
<polyline points="801.25,49 803.5,54.8 805.75,49" fill="none" stroke="#8c8c30" stroke-width="1.1"/>
<polyline points="900.3,49 901.8,52 903.3,49" fill="none" stroke="#8c8c30" stroke-width="1.1"/>
<polyline points="932.4,49 935.4,64.6 938.4,49" fill="none" stroke="#8c8c30" stroke-width="1.1"/>
<polyline points="1145.75,49 1147,51 1148.25,49" fill="none" stroke="#8c8c30" stroke-width="1.1"/>
<polyline points="114.4,731.0 123.0,731.0 125.5,707.8 133.6,707.8 137.3,731.0 148.7,731.0 152.1,755.0 163.9,755.0 167.6,731.0 182.6,731.0 186.0,707.8 197.8,707.8 205.6,755.0 209.2,707.8 228.8,707.8 231.0,685.3 235.5,685.3 239.4,707.8 243.6,685.3 250.2,685.3 253.9,707.8 265.9,707.8 272.5,755.0 279.2,755.0 288.0,777.5 296.6,777.5 299.1,731.0 303.5,731.0 307.2,755.0 310.9,731.0 316.1,731.0 322.0,685.3 340.9,685.3 345.3,707.8 349.3,685.3 356.7,685.3 360.1,660.9 368.5,660.9 371.9,685.3 375.9,685.3 379.3,660.9 383.2,660.9 390.2,707.8 394.3,685.3 402.4,685.3 409.1,731.0 421.1,731.0 424.3,708.9 428.0,731.0 432.1,685.3 436.3,731.0 443.7,731.0 447.6,685.3 455.8,685.3 460.2,731.0 462.8,731.0 466.1,685.3 470.5,685.3 474.2,661.6 477.6,685.3 485.3,685.3 489.7,707.8 492.7,707.8 496.3,731.0 504.5,731.0 511.1,685.3 515.5,685.3 519.2,707.8 523.4,685.3 527.3,685.3 534.0,731.0 538.4,731.0 542.1,708.9 545.1,755.0 549.5,731.0 553.2,731.0 559.1,755.0 562.0,755.0 565.0,731.0 568.1,731.0 571.8,755.0 591.7,755.0 595.4,731.0 610.9,731.0 614.6,707.8 617.9,707.8 621.3,731.0 651.5,731.0 654.5,685.3 659.2,685.3 663.3,707.8 667.0,686.0 670.4,731.0 678.1,661.6 682.2,685.3 689.2,685.3 693.6,707.8 697.3,707.8 701.0,685.3 704.4,685.3 707.9,661.6 712.1,685.3 721.1,685.3 723.3,731.0 727.0,685.3 732.1,707.8 735.4,707.8 738.0,685.3 742.2,731.0 750.6,685.3 754.3,685.3 756.9,731.0 784.5,731.0 788.2,755.0 803.7,755.0 807.1,731.0 810.0,755.0 852.4,755.0 856.1,776.8 871.5,776.8 879.2,731.0 882.1,731.0 885.8,755.0 902.1,755.0 904.6,708.9 906.1,708.9 908.7,755.0 914.6,731.0 916.8,731.0 920.5,755.0 924.2,755.0 927.9,776.8 935.3,773.1 939.0,755.0 958.2,755.0 962.1,773.8 966.0,755.0 977.3,755.0 981.0,773.8 987.7,731.0 992.1,731.0 996.5,755.0 1001.0,755.0 1003.9,731.0 1007.6,731.0 1010.8,708.9 1015.1,731.0 1064.6,731.0 1079.5,612.7 1083.8,612.7 1094.1,685.3 1098.6,685.3 1102.3,661.6 1108.9,731.0 1117.5,731.0 1121.3,708.8 1125.5,731.0 1128.1,731.0 1132.8,753.0 1136.2,731.0 1140.5,755.0 1143.6,755.0 1148.2,731.0 1159.5,731.0 1163.0,755.0 1175.0,755.0 1178.3,776.5 1182.4,776.5 1185.7,755.0 1193.9,755.0 1197.2,731.0 1200.5,731.0" fill="none" stroke="#0000ff" stroke-width="2.2" stroke-linejoin="round" stroke-linecap="round" shape-rendering="crispEdges"/>
<polyline points="114.4,745.8 119.6,741.3 124.0,742.8 129.9,734.7 139.5,739.1 148.4,746.5 154.3,755.4 164.6,766.4 172.0,756.8 178.6,756.8 193.4,735.4 205.2,748.7 212.6,739.1 219.2,736.2 234.7,717.7 239.9,722.2 251.7,713.0 260.3,718.8 268.9,728.8 274.8,742.1 283.6,755.4 295.4,768.7 305.8,768.7 314.6,761.3 322.0,750.9 329.4,744.3 333.8,745.0 338.2,739.9 344.9,742.1 350.0,737.7 355.2,739.9 368.5,727.3 375.1,727.3 382.8,726.5 389.5,730.9 394.5,731.3 399.1,734.5 401.8,733.2 405.4,739.1 413.6,749.0 417.2,749.5 421.2,754.3 425.1,749.5 428.3,752.5 432.2,748.2 437.5,752.3 439.0,752.2 443.2,755.6 455.0,742.3 460.0,746.8 466.5,749.2 474.2,741.3 481.6,739.1 486.8,742.1 494.1,744.3 502.2,750.2 508.2,748.0 511.8,741.3 519.2,742.8 523.4,739.1 532.5,743.6 542.8,745.8 548.7,747.3 557.6,756.1 566.6,759.8 574.0,765.7 583.6,771.6 588.0,771.6 592.5,768.7 599.1,764.2 608.7,761.0 614.6,756.1 621.3,759.1 627.9,756.8 636.8,756.6 641.2,756.8 644.9,754.6 649.3,757.6 658.9,748.7 669.2,744.3 675.1,740.6 679.6,731.8 688.4,731.0 694.3,729.5 701.7,733.2 706.1,731.0 715.5,732.8 723.3,745.8 730.7,743.6 738.0,743.6 745.4,748.7 750.6,743.6 760.9,751.7 772.0,754.6 780.8,761.3 783.8,759.1 795.6,768.7 802.2,771.6 807.4,767.9 814.1,767.5 822.2,770.9 837.0,773.8 841.4,774.6 848.7,770.9 857.6,774.6 871.8,775.3 879.2,772.3 888.0,773.1 898.4,773.8 905.0,768.7 908.7,768.7 915.4,764.2 922.7,770.9 933.8,773.8 942.7,775.3 978.1,775.3 986.9,771.6 998.7,771.6 1007.6,764.9 1015.9,760.5 1018.9,761.3 1023.3,758.3 1032.1,756.8 1035.1,755.4 1048.4,750.9 1057.2,748.7 1067.6,747.3 1073.5,741.3 1083.1,717.7 1086.8,719.9 1090.4,718.2 1094.9,720.7 1100.8,720.7 1107.4,734.0 1113.3,740.6 1119.2,742.1 1122.5,740.0 1127.0,744.5 1133.0,755.1 1142.9,763.4 1149.5,757.6 1156.0,753.5 1164.3,760.9 1175.8,769.9 1180.7,771.6 1185.7,768.3 1192.2,773.2 1197.2,767.5 1200.5,766.6" fill="none" stroke="#f8f8f8" stroke-width="3" stroke-linejoin="round" stroke-linecap="round" shape-rendering="crispEdges"/>
<rect x="114" y="777" width="921" height="1" fill="#000000" shape-rendering="crispEdges"/>
<line x1="1035" y1="777.5" x2="1200" y2="777.5" stroke="#000" stroke-width="1" stroke-dasharray="1,3" shape-rendering="crispEdges"/>
<rect x="1036" y="749" width="3" height="29" fill="#000000" shape-rendering="crispEdges"/>
<rect x="1071" y="749" width="3" height="29" fill="#000000" shape-rendering="crispEdges"/>
<rect x="1108" y="749" width="3" height="29" fill="#000000" shape-rendering="crispEdges"/>
<rect x="1127" y="749" width="3" height="29" fill="#000000" shape-rendering="crispEdges"/>
<polyline points="1034.4,777.0 1038.8,767.2 1045.4,761.3 1057.2,753.9 1068.3,750.9 1072.0,742.1 1079.4,733.2 1089.7,726.6 1098.6,723.2 1106.7,721.4 1108.2,711.8 1116.3,703.7 1125.1,698.5 1128.1,688.2 1134.7,678.7 1144.5,669.3 1156.1,664.7 1175.8,661.7 1200.5,660.6" fill="none" stroke="#000000" stroke-width="2" stroke-linejoin="round" stroke-linecap="round" shape-rendering="crispEdges"/>
<polyline points="114.5,82.5 127.0,83.1 134.5,84.4 139.5,85.4 149.5,86.9 157.0,87.5 163.2,89.4 169.5,88.8 182.0,89.8 204.5,93.1 210.8,94.0 222.0,94.4 229.5,96.9 235.8,98.5 242.0,99.8 248.2,100.6 253.2,102.5 259.5,103.5 265.8,105.2 272.0,106.5 284.2,108.1 289.9,109.4 295.5,110.6 301.8,111.5 306.8,112.5 313.6,113.5 325.5,116.2 337.4,118.5 343.0,119.4 349.2,120.4 355.5,121.2 361.8,121.5 374.2,122.5 386.8,123.5 399.2,123.8 411.8,124.4 416.8,125.2 435.0,125.2 445.0,125.6 452.5,126.5 470.0,127.2 476.2,128.5 487.5,128.8 495.0,129.4 507.5,130.6 522.5,131.5 535.0,133.1 547.5,134.4 560.0,135.6 566.2,136.5 571.2,137.2 577.5,137.5 583.8,139.4 590.0,140.2 595.6,141.5 601.2,143.8 607.5,145.5 613.8,147.5 619.4,149.8 625.0,152.2 631.2,154.0 637.5,157.2 643.1,159.4 649.4,161.0 655.6,162.5 661.2,165.0 667.5,166.5 673.8,168.1 679.4,169.4 685.6,171.5 691.2,172.8 697.5,174.4 703.8,176.5 710.0,177.2 715.0,178.8 721.9,180.2 727.5,182.5 740.0,184.4 751.2,186.5 762.5,187.5 775.0,189.0 805.0,189.4 811.2,191.2 817.5,193.1 830.0,194.4 841.2,195.2 853.8,196.5 873.6,196.4 879.1,195.5 895.4,194.4 906.3,194.4 911.7,195.5 933.5,195.5 944.4,194.4 949.9,193.0 955.3,191.9 960.8,191.0 977.1,189.6 989.4,188.9 1016.6,188.2 1025.9,188.5 1038.6,187.0 1073.6,186.6 1083.1,185.4 1095.9,183.0 1107.0,181.4 1115.9,180.6 1123.8,179.3 1139.7,179.3 1144.5,180.6 1154.1,182.2 1197.0,183.0" fill="none" stroke="#0000ff" stroke-width="1" stroke-linejoin="round" stroke-linecap="round" stroke-dasharray="3,3" shape-rendering="crispEdges"/>
<polyline points="114.5,85.4 133.2,85.4 138.9,89.4 143.2,90.4 150.8,91.2 158.9,92.5 167.0,92.5 173.2,89.8 178.2,88.5 182.6,90.4 189.5,91.2 204.5,92.5 210.8,96.2 215.8,97.2 219.5,95.6 224.5,95.6 228.9,97.2 235.8,96.2 238.9,95.4 243.2,97.2 248.2,97.2 253.2,99.4 262.0,99.4 267.0,96.5 271.8,95.6 279.2,94.4 289.9,93.8 299.2,93.1 302.4,91.2 307.4,90.0 313.0,85.0 318.0,83.1 325.5,81.5 329.2,80.2 336.1,79.4 346.8,78.8 361.8,78.8 366.8,81.0 371.8,85.0 380.5,88.5 389.2,91.2 397.4,88.1 403.0,92.8 413.0,96.2 418.0,100.2 423.8,102.8 428.8,104.4 431.9,105.4 437.5,105.6 445.0,106.5 452.5,107.5 457.5,110.2 462.5,112.5 468.8,112.5 475.0,116.5 476.9,115.2 481.9,118.1 487.5,118.1 492.5,123.1 500.0,126.0 503.8,124.4 508.1,126.2 511.9,124.4 515.6,124.4 520.0,121.2 523.8,123.5 530.6,120.2 535.0,122.5 538.1,121.2 545.0,125.2 553.8,133.8 560.0,139.8 564.4,140.2 571.9,148.1 577.5,148.1 580.0,150.0 583.8,148.1 591.2,151.9 595.0,151.2 598.1,155.2 605.0,155.6 606.9,156.5 610.0,155.2 615.0,157.2 621.2,155.2 625.0,157.2 628.8,155.2 633.8,156.0 636.9,157.5 643.1,154.4 646.2,155.0 650.6,157.5 655.0,155.2 659.4,157.2 662.5,155.2 668.8,155.2 670.6,156.5 673.8,155.2 678.8,159.4 685.0,159.4 690.0,156.5 695.0,156.5 697.5,157.2 703.8,158.5 710.0,161.9 715.6,163.1 719.4,162.2 723.1,164.4 728.8,157.5 731.9,156.2 736.2,156.2 742.5,154.0 747.5,151.2 750.0,150.2 755.0,146.0 762.5,142.5 771.9,140.4 776.9,137.5 780.0,138.5 787.5,138.1 791.9,135.2 796.2,137.5 803.1,134.4 807.5,136.5 814.4,136.2 818.1,134.4 822.5,136.5 831.9,136.9 841.2,137.5 845.6,135.2 848.1,136.2 855.0,133.5 861.9,135.6 866.2,133.5 870.0,133.5 880.4,132.0 887.2,127.7 890.6,127.4 894.7,129.3 897.5,126.6 901.5,128.3 908.3,129.0 913.8,126.3 916.5,126.3 920.6,122.2 925.1,124.2 931.5,120.8 937.6,118.4 952.6,116.1 977.1,115.1 982.5,112.7 994.8,109.0 1005.7,107.9 1026.7,108.3 1033.8,102.7 1037.8,97.1 1045.8,92.8 1050.5,87.6 1059.3,82.8 1065.6,78.5 1070.4,76.5 1076.0,74.9 1080.0,76.5 1105.4,77.3 1107.9,78.5 1117.5,78.5 1123.8,74.9 1131.8,72.8 1142.9,71.2 1171.5,70.9 1193.8,70.1 1199.4,66.9" fill="none" stroke="#ff0000" stroke-width="1" stroke-linejoin="round" stroke-linecap="round" shape-rendering="crispEdges"/>
<polyline points="114.0,435.0 384.0,435.0 387.0,431.7 394.0,430.5" fill="none" stroke="#008000" stroke-width="1" stroke-linejoin="round" stroke-linecap="round" shape-rendering="crispEdges"/>
<polyline points="884.0,453.0 895.5,452.2 908.4,446.5 916.0,445.5 921.2,447.2 931.6,448.5 939.3,453.0 943.2,451.5 949.6,454.5 957.3,456.0 965.0,460.0 978.0,463.5 990.9,464.5 998.6,468.0 1011.5,471.0 1021.8,468.0 1027.0,464.5 1037.0,460.5 1045.0,456.0 1060.5,452.0 1086.2,451.5 1112.0,450.5 1117.2,453.5 1137.8,457.0 1163.6,458.0 1199.7,458.5" fill="none" stroke="#008000" stroke-width="1" stroke-linejoin="round" stroke-linecap="round" shape-rendering="crispEdges"/>
<polyline points="114.0,611.0 123.6,612.0 132.7,613.5 148.6,617.0 160.0,619.0 175.8,625.0 189.4,629.5 214.4,630.0 223.5,633.0 250.7,632.0 257.5,630.0 273.4,628.5 290.0,626.0 302.7,626.0 309.5,623.0 320.9,621.0 336.7,621.0 348.0,623.0 359.4,625.0 373.0,630.0 384.4,633.0 393.5,636.5 407.0,641.0 432.0,646.5 450.0,649.0 463.6,651.0 472.7,653.0 488.6,655.5 502.2,657.0 522.6,657.0 536.2,659.0 559.0,659.0 581.6,657.5 595.3,654.0 608.9,647.5 620.2,643.0 629.0,639.0 638.2,635.0 654.0,633.0 672.2,631.0 692.6,628.5 704.0,624.5 715.3,622.5 729.0,621.0 738.0,619.5 749.4,619.5 763.0,625.0 774.3,627.5 800.0,627.5 835.4,625.9 849.0,626.3 853.5,627.9 864.9,629.0 880.8,630.0 887.6,630.9 901.2,630.4 914.8,631.1 930.7,631.5 935.3,632.7 958.0,632.2 1003.1,632.0 1012.2,633.6 1029.2,633.6 1041.7,639.5 1055.3,642.7 1062.1,645.6 1071.2,646.7 1078.0,650.1 1087.1,653.5 1096.2,657.0 1105.3,659.9 1118.9,663.1 1128.0,666.0 1141.7,667.6 1200.7,667.6" fill="none" stroke="#ff0000" stroke-width="2.2" stroke-linejoin="round" stroke-linecap="round" shape-rendering="crispEdges"/>
<polyline points="114.5,106.9 122.0,106.9 122.6,107.9 129.5,107.9 130.1,109.0 152.0,109.0 152.6,110.0 178.2,110.0 178.9,111.0 190.1,111.0 190.8,111.9 228.2,111.9 228.9,112.9 238.9,112.9 239.5,114.0 250.8,114.0 251.4,115.0 265.1,115.0 265.8,116.0 311.8,116.0 312.4,115.0 323.0,115.0 323.6,114.0 334.9,114.0 335.5,113.0 356.1,113.0 356.8,112.0 361.1,112.0 361.8,111.0 375.5,111.0 376.1,110.0 398.0,110.0 398.6,109.0 405.5,109.0 406.1,108.1 413.0,108.1 413.6,106.9 418.0,106.9 423.0,105.0 430.0,102.9 432.5,103.5 443.8,104.0 451.2,105.0 470.0,106.0 470.6,106.9 500.0,106.9 500.6,107.9 508.1,107.9 508.8,108.8 523.8,108.8 527.5,110.6 538.1,110.6 538.8,111.9 571.9,111.9 572.5,112.9 591.2,112.9 591.9,113.8 602.5,113.8 603.1,112.8 633.1,112.8 633.8,113.8 644.4,113.8 645.0,114.8 715.6,114.8 720.6,116.9 730.6,116.9 735.6,118.8 742.5,119.8 761.2,119.8 761.9,120.9 780.0,120.9 780.6,121.9 788.8,122.9 810.0,122.9 810.6,124.0 860.0,124.0 865.0,121.9 868.2,120.8 875.0,119.8 881.8,117.9 887.2,116.8 895.4,116.1 900.9,114.7 907.7,113.0 911.7,112.0 917.2,107.9 924.0,106.5 932.2,104.5 936.2,102.0 941.7,99.7 948.5,96.6 958.0,93.6 968.9,91.6 978.5,89.8 986.6,88.8 1000.2,88.8 1008.4,90.6 1019.5,90.8 1024.3,88.7 1030.7,87.6 1041.8,84.4 1051.3,82.8 1060.9,80.4 1070.4,79.6 1083.1,79.6 1086.3,78.5 1102.2,78.5 1104.8,79.6 1112.7,82.3 1119.9,83.9 1126.2,87.6 1133.4,90.8 1141.3,94.0 1150.9,97.1 1162.0,100.3 1171.5,102.7 1182.7,105.1 1192.2,106.7 1199.4,107.9" fill="none" stroke="#008000" stroke-width="2.2" stroke-linejoin="round" stroke-linecap="round" shape-rendering="crispEdges"/>
<rect x="0" y="807" width="1280" height="1" fill="#a8a8a8" shape-rendering="crispEdges"/>
<rect x="0" y="808" width="1279" height="73" fill="#ffffff" shape-rendering="crispEdges"/>
<rect x="1" y="809" width="1278" height="72" fill="#cdf9f5" shape-rendering="crispEdges"/>
<rect x="1278" y="808" width="2" height="73" fill="#909090" shape-rendering="crispEdges"/>
<rect x="88" y="809" width="1" height="72" fill="#6a6a6a" shape-rendering="crispEdges"/>
<rect x="205" y="809" width="1" height="72" fill="#6a6a6a" shape-rendering="crispEdges"/>
<rect x="323" y="809" width="1" height="72" fill="#6a6a6a" shape-rendering="crispEdges"/>
<rect x="441" y="809" width="1" height="72" fill="#6a6a6a" shape-rendering="crispEdges"/>
<rect x="559" y="809" width="1" height="72" fill="#6a6a6a" shape-rendering="crispEdges"/>
<rect x="677" y="809" width="1" height="72" fill="#6a6a6a" shape-rendering="crispEdges"/>
<rect x="795" y="809" width="1" height="72" fill="#6a6a6a" shape-rendering="crispEdges"/>
<rect x="913" y="809" width="1" height="72" fill="#6a6a6a" shape-rendering="crispEdges"/>
<text x="8.5" y="827" fill="#000000" font-size="12" text-anchor="start" font-weight="bold" textLength="39" lengthAdjust="spacingAndGlyphs" >Sensor</text>
<text x="8.5" y="843" fill="#000000" font-size="12" text-anchor="start" font-weight="bold" textLength="46.5" lengthAdjust="spacingAndGlyphs" >MinWert</text>
<text x="8.5" y="859" fill="#000000" font-size="12" text-anchor="start" font-weight="bold" textLength="49.5" lengthAdjust="spacingAndGlyphs" >MaxWert</text>
<text x="8.5" y="875" fill="#000000" font-size="12" text-anchor="start" font-weight="bold" textLength="71.5" lengthAdjust="spacingAndGlyphs" >Durchschnitt</text>
<text x="94.5" y="827" fill="#000000" font-size="12" text-anchor="start" font-weight="bold" textLength="50" lengthAdjust="spacingAndGlyphs" >Temp. A.</text>
<text x="198.5" y="827" fill="#000000" font-size="12" text-anchor="end" font-weight="bold" textLength="13" lengthAdjust="spacingAndGlyphs" >°C</text>
<text x="100.5" y="843" fill="#000000" font-size="12" text-anchor="start" textLength="27" lengthAdjust="spacingAndGlyphs" >22:05</text>
<text x="198.5" y="843" fill="#000000" font-size="12" text-anchor="end" textLength="15" lengthAdjust="spacingAndGlyphs" >3.9</text>
<text x="100.5" y="859" fill="#000000" font-size="12" text-anchor="start" textLength="27" lengthAdjust="spacingAndGlyphs" >00:00</text>
<text x="198.5" y="859" fill="#000000" font-size="12" text-anchor="end" textLength="15" lengthAdjust="spacingAndGlyphs" >6.0</text>
<text x="198.5" y="875" fill="#000000" font-size="12" text-anchor="end" textLength="21" lengthAdjust="spacingAndGlyphs" >4.98</text>
<text x="212.5" y="827" fill="#000000" font-size="12" text-anchor="start" font-weight="bold" textLength="46" lengthAdjust="spacingAndGlyphs" >Temp. I.</text>
<text x="316.5" y="827" fill="#000000" font-size="12" text-anchor="end" font-weight="bold" textLength="13" lengthAdjust="spacingAndGlyphs" >°C</text>
<text x="218.5" y="843" fill="#000000" font-size="12" text-anchor="start" textLength="27" lengthAdjust="spacingAndGlyphs" >14:45</text>
<text x="316.5" y="843" fill="#000000" font-size="12" text-anchor="end" textLength="21" lengthAdjust="spacingAndGlyphs" >23.3</text>
<text x="218.5" y="859" fill="#000000" font-size="12" text-anchor="start" textLength="27" lengthAdjust="spacingAndGlyphs" >20:45</text>
<text x="316.5" y="859" fill="#000000" font-size="12" text-anchor="end" textLength="21" lengthAdjust="spacingAndGlyphs" >24.9</text>
<text x="316.5" y="875" fill="#000000" font-size="12" text-anchor="end" textLength="27" lengthAdjust="spacingAndGlyphs" >23.87</text>
<text x="684" y="827" fill="#000000" font-size="12" text-anchor="start" font-weight="bold" textLength="46" lengthAdjust="spacingAndGlyphs" >Luftdruck</text>
<text x="788.5" y="827" fill="#000000" font-size="12" text-anchor="end" font-weight="bold" textLength="20" lengthAdjust="spacingAndGlyphs" >hPa</text>
<text x="690" y="843" fill="#000000" font-size="12" text-anchor="start" textLength="27" lengthAdjust="spacingAndGlyphs" >16:05</text>
<text x="788.5" y="843" fill="#000000" font-size="12" text-anchor="end" textLength="33" lengthAdjust="spacingAndGlyphs" >1019.8</text>
<text x="690" y="859" fill="#000000" font-size="12" text-anchor="start" textLength="27" lengthAdjust="spacingAndGlyphs" >00:00</text>
<text x="788.5" y="859" fill="#000000" font-size="12" text-anchor="end" textLength="33" lengthAdjust="spacingAndGlyphs" >1027.7</text>
<text x="684" y="875" fill="#000000" font-size="12" text-anchor="start" textLength="51" lengthAdjust="spacingAndGlyphs" >^1.3hPa/h</text>
<text x="788.5" y="875" fill="#000000" font-size="12" text-anchor="end" textLength="33" lengthAdjust="spacingAndGlyphs" >1022.8</text>
<text x="802.5" y="827" fill="#000000" font-size="12" text-anchor="start" font-weight="bold" textLength="37" lengthAdjust="spacingAndGlyphs" >Regen</text>
<text x="906" y="827" fill="#000000" font-size="12" text-anchor="end" font-weight="bold" textLength="22" lengthAdjust="spacingAndGlyphs" >l/m²</text>
<text x="808.5" y="859" fill="#000000" font-size="12" text-anchor="start" textLength="27" lengthAdjust="spacingAndGlyphs" >20:20</text>
<text x="906" y="859" fill="#000000" font-size="12" text-anchor="end" textLength="15" lengthAdjust="spacingAndGlyphs" >0.2</text>
<text x="802.5" y="875" fill="#000000" font-size="12" text-anchor="start" textLength="38" lengthAdjust="spacingAndGlyphs" >Gesamt:</text>
<text x="906" y="875" fill="#000000" font-size="12" text-anchor="end" textLength="15" lengthAdjust="spacingAndGlyphs" >0.8</text>
<text x="920" y="827" fill="#000000" font-size="12" text-anchor="start" font-weight="bold" textLength="29" lengthAdjust="spacingAndGlyphs" >Wind</text>
<text x="1021.5" y="827" fill="#000000" font-size="12" text-anchor="end" font-weight="bold" textLength="28" lengthAdjust="spacingAndGlyphs" >km/h</text>
<text x="920" y="843" fill="#000000" font-size="12" text-anchor="start" textLength="44" lengthAdjust="spacingAndGlyphs" >Ø 10 min.</text>
<text x="1021.5" y="843" fill="#000000" font-size="12" text-anchor="end" textLength="15" lengthAdjust="spacingAndGlyphs" >1.5</text>
<text x="926" y="859" fill="#000000" font-size="12" text-anchor="start" textLength="27" lengthAdjust="spacingAndGlyphs" >21:20</text>
<text x="1021.5" y="859" fill="#000000" font-size="12" text-anchor="end" textLength="45" lengthAdjust="spacingAndGlyphs" >S-SW 6.4</text>
<text x="1021.5" y="875" fill="#000000" font-size="12" text-anchor="end" textLength="15" lengthAdjust="spacingAndGlyphs" >1.8</text>
<rect x="394" y="341" width="491" height="164" fill="#d4d0c8" shape-rendering="crispEdges"/>
<rect x="395" y="342" width="489" height="162" fill="#ffffff" shape-rendering="crispEdges"/>
<rect x="395" y="503" width="489" height="1" fill="#808080" shape-rendering="crispEdges"/>
<rect x="883" y="342" width="1" height="162" fill="#808080" shape-rendering="crispEdges"/>
<rect x="394" y="504" width="491" height="1" fill="#404040" shape-rendering="crispEdges"/>
<rect x="884" y="341" width="1" height="164" fill="#404040" shape-rendering="crispEdges"/>
<rect x="396" y="343" width="487" height="160" fill="#ece9e0" shape-rendering="crispEdges"/>
<rect x="397" y="344" width="485" height="158" fill="#f5f5f5" shape-rendering="crispEdges"/>
<defs><linearGradient id="tg" x1="0" x2="1" y1="0" y2="0"><stop offset="0" stop-color="#0a246a"/><stop offset="0.5" stop-color="#4a6cac"/><stop offset="1" stop-color="#a6caf0"/></linearGradient><linearGradient id="ig" x1="0" x2="1" y1="0" y2="1"><stop offset="0" stop-color="#22a8f8"/><stop offset="1" stop-color="#0a5ae6"/></linearGradient><radialGradient id="eg" cx="0.45" cy="0.35" r="0.7"><stop offset="0" stop-color="#ffffff"/><stop offset="1" stop-color="#d8d8d8"/></radialGradient></defs>
<rect x="397" y="344" width="486" height="18" fill="url(#tg)" shape-rendering="crispEdges"/>
<text x="399" y="357" fill="#ffffff" font-size="11.6" text-anchor="start" font-weight="bold" textLength="138" lengthAdjust="spacingAndGlyphs" >Gesponserte Verbindung</text>
<defs><linearGradient id="ig2" x1="0" x2="1" y1="0" y2="1"><stop offset="0" stop-color="#2ab6ff"/><stop offset="0.55" stop-color="#1a86f4"/><stop offset="1" stop-color="#0a56e0"/></linearGradient><linearGradient id="sg" x1="0" x2="0" y1="0" y2="1"><stop offset="0" stop-color="#1070f0"/><stop offset="1" stop-color="#0038c0"/></linearGradient><radialGradient id="eg2" cx="0.5" cy="0.3" r="0.75"><stop offset="0" stop-color="#fbfbfb"/><stop offset="0.6" stop-color="#eeeeee"/><stop offset="1" stop-color="#d6d6d6"/></radialGradient></defs>
<polygon points="446,414 458,418 456,428 446,430" fill="#dcdcdc" opacity="0.9"/>
<path d="M408,374.5 Q405.8,374.6 406,377 L408.3,416 Q408.6,418.5 411,419 L445,426.3 Q447,426.5 447,424 L447,381 Q447,378.8 445,378.6 Z" fill="url(#ig2)"/>
<path d="M445.5,378.6 Q448,378.8 449.3,380.5 L449.5,424 Q449,426.5 446.5,426.5 L447,381 Z" fill="url(#sg)"/>
<path d="M445.5,378.5 L448.5,379.5 L447.5,382 Z" fill="#40e0ff"/>
<ellipse cx="425.5" cy="400.3" rx="14.8" ry="18.2" transform="rotate(-10 425.5 400.3)" fill="url(#eg2)" stroke="#0a3aa8" stroke-width="1"/>
<path d="M413.1,397.8 L421.8,393.6 L421.6,396.6 L429.4,398 L429.4,394.8 L439.8,402.6 L429.4,406.6 L429.4,401.9 L421.8,400.7 L421.8,405.2 Z" fill="#1a7ef0" stroke="#0b56c8" stroke-width="0.5"/>
<text x="477.5" y="385" fill="#000000" font-size="11" text-anchor="start" textLength="347.5" lengthAdjust="spacingAndGlyphs" stroke="#000" stroke-width="0.2">Dies war eine kostenlose Sitzung gesponsert von www.teamviewer.com.</text>
<text x="477.5" y="398" fill="#000000" font-size="11" text-anchor="start" textLength="356.5" lengthAdjust="spacingAndGlyphs" stroke="#000" stroke-width="0.2">TeamViewer-Sitzungen sind für den privaten Gebrauch komplett kostenlos.</text>
<text x="477.5" y="424" fill="#000000" font-size="11" text-anchor="start" textLength="172.5" lengthAdjust="spacingAndGlyphs" stroke="#000" stroke-width="0.2">Wir bedanken uns für Ihre Fairness.</text>
<rect x="407" y="459" width="465" height="2" fill="#e2e2e2" shape-rendering="crispEdges"/>
<rect x="578" y="470" width="95" height="23" fill="#404040" shape-rendering="crispEdges"/>
<rect x="578" y="470" width="94" height="22" fill="#ffffff" shape-rendering="crispEdges"/>
<rect x="579" y="471" width="93" height="21" fill="#808080" shape-rendering="crispEdges"/>
<rect x="579" y="471" width="92" height="20" fill="#d4d0c8" shape-rendering="crispEdges"/>
<text x="625.5" y="485.0" fill="#000000" font-size="11" text-anchor="middle" textLength="51" lengthAdjust="spacingAndGlyphs" >Gefällt mir!</text>
<rect x="678" y="470" width="95" height="23" fill="#404040" shape-rendering="crispEdges"/>
<rect x="678" y="470" width="94" height="22" fill="#ffffff" shape-rendering="crispEdges"/>
<rect x="679" y="471" width="93" height="21" fill="#808080" shape-rendering="crispEdges"/>
<rect x="679" y="471" width="92" height="20" fill="#d4d0c8" shape-rendering="crispEdges"/>
<text x="725.5" y="485.0" fill="#000000" font-size="11" text-anchor="middle" textLength="65" lengthAdjust="spacingAndGlyphs" >Lizenz kaufen</text>
<rect x="778" y="470" width="95" height="23" fill="#000000" shape-rendering="crispEdges"/>
<rect x="779" y="471" width="93" height="21" fill="#404040" shape-rendering="crispEdges"/>
<rect x="779" y="471" width="92" height="20" fill="#ffffff" shape-rendering="crispEdges"/>
<rect x="780" y="472" width="91" height="19" fill="#808080" shape-rendering="crispEdges"/>
<rect x="780" y="472" width="90" height="18" fill="#d4d0c8" shape-rendering="crispEdges"/>
<text x="825.5" y="485.0" fill="#000000" font-size="11" text-anchor="middle" textLength="13.5" lengthAdjust="spacingAndGlyphs" >OK</text>
</svg></body></html>
